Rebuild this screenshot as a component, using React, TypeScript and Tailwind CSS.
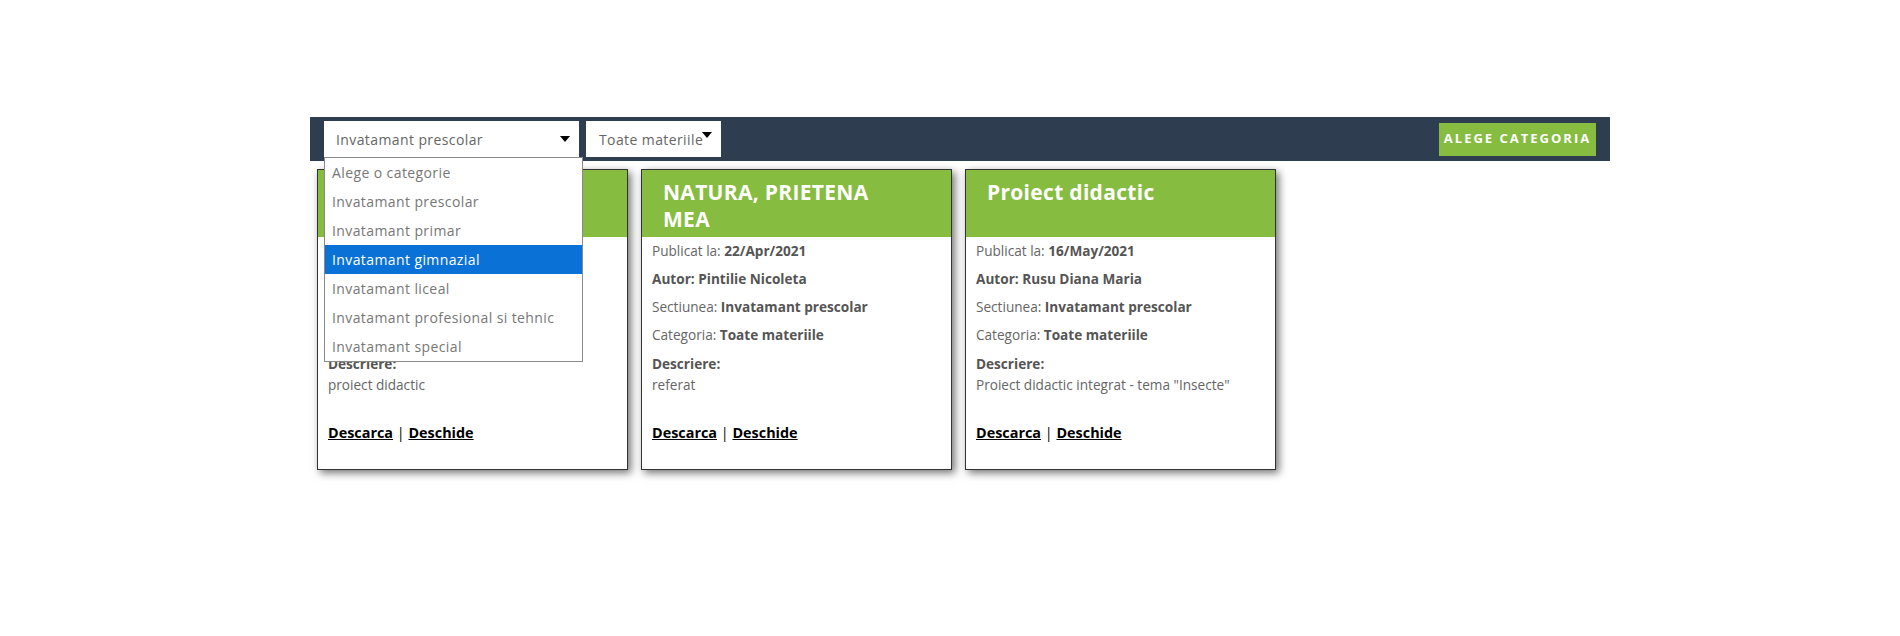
import React from 'react'

type Doc = {
  title: string
  date: string
  author: string
  section: string
  category: string
  description: string
}

const docs: Doc[] = [
  {
    title: 'Proiect didactic',
    date: '12/Apr/2021',
    author: 'Popescu Ana',
    section: 'Invatamant prescolar',
    category: 'Toate materiile',
    description: 'proiect didactic',
  },
  {
    title: 'NATURA, PRIETENA MEA',
    date: '22/Apr/2021',
    author: 'Pintilie Nicoleta',
    section: 'Invatamant prescolar',
    category: 'Toate materiile',
    description: 'referat',
  },
  {
    title: 'Proiect didactic',
    date: '16/May/2021',
    author: 'Rusu Diana Maria',
    section: 'Invatamant prescolar',
    category: 'Toate materiile',
    description: 'Proiect didactic integrat - tema "Insecte"',
  },
]

const options = [
  'Alege o categorie',
  'Invatamant prescolar',
  'Invatamant primar',
  'Invatamant gimnazial',
  'Invatamant liceal',
  'Invatamant profesional si tehnic',
  'Invatamant special',
]

const poppins = { fontFamily: '"Open Sans", "Noto Sans", sans-serif' }

function Caret() {
  return (
    <svg width="10" height="6" viewBox="0 0 10 6" className="shrink-0">
      <path d="M0 0h10L5 6z" fill="#000" />
    </svg>
  )
}

function Card({ doc }: { doc: Doc }) {
  return (
    <div className="w-[311px] h-[301px] border border-[#333] bg-white shadow-[3px_3px_8px_rgba(0,0,0,0.55)] flex flex-col">
      <div className="h-[67px] bg-[#86bc40] pl-[21px] pr-[40px] pt-[9px]">
        <h2 className="text-[21px] leading-[27px] font-bold tracking-[0.3px] text-white">{doc.title}</h2>
      </div>
      <div className="px-[10px] pt-[4px] text-[13.6px] leading-[20px] text-[#666]">
        <p>
          Publicat la: <b className="text-[#555]">{doc.date}</b>
        </p>
        <p className="mt-[8px] font-bold text-[#555]">Autor: {doc.author}</p>
        <p className="mt-[8px]">
          Sectiunea: <b className="text-[#555]">{doc.section}</b>
        </p>
        <p className="mt-[8px]">
          Categoria: <b className="text-[#555]">{doc.category}</b>
        </p>
        <p className="mt-[8px] leading-[21px]">
          <b className="text-[#555]">Descriere:</b>
          <br />
          {doc.description}
        </p>
        <p className="mt-[28px] text-black text-[14.4px]">
          <a href="#" className="font-bold underline">
            Descarca
          </a>{' '}
          |{' '}
          <a href="#" className="font-bold underline">
            Deschide
          </a>
        </p>
      </div>
    </div>
  )
}

export default function App() {
  return (
    <div className="min-h-[636px] bg-white pt-[117px]" style={{ fontFamily: '"Open Sans", "DejaVu Sans", sans-serif' }}>
      <div className="ml-[310px] w-[1300px]">
        <div className="h-[44px] bg-[#2e3e50] flex items-center px-[14px] relative">
          <div className="relative">
            <div className="w-[255px] h-[36px] bg-white flex items-center justify-between pl-[12px] pr-[9px] text-[14px] tracking-[0.4px] text-[#666]" style={poppins}>
              <span>Invatamant prescolar</span>
              <Caret />
            </div>
            <ul className="absolute left-0 top-[36px] w-[259px] bg-white border border-[#8a8a8a] z-10 text-[14px] tracking-[0.4px] text-[#777]" style={poppins}>
              {options.map((o, i) => (
                <li key={o} className={`h-[29px] leading-[29px] pl-[7px] ${i === 3 ? 'bg-[#0a72d6] text-white' : ''}`}>
                  {o}
                </li>
              ))}
            </ul>
          </div>
          <div className="ml-[7px] w-[135px] h-[36px] bg-white flex items-center pl-[13px] text-[14px] tracking-[0.4px] text-[#666]" style={poppins}>
            <span>Toate materiile</span>
            <span className="-ml-[1px] -mt-[8px]">
              <Caret />
            </span>
          </div>
          <button className="ml-auto h-[33px] w-[157px] bg-[#86bc40] text-white text-[13px] font-bold tracking-[2px]" style={poppins}>
            ALEGE CATEGORIA
          </button>
        </div>
        <div className="flex gap-[13px] ml-[7px] mt-[8px]">
          {docs.map((d, i) => (
            <Card key={i} doc={d} />
          ))}
        </div>
      </div>
    </div>
  )
}
